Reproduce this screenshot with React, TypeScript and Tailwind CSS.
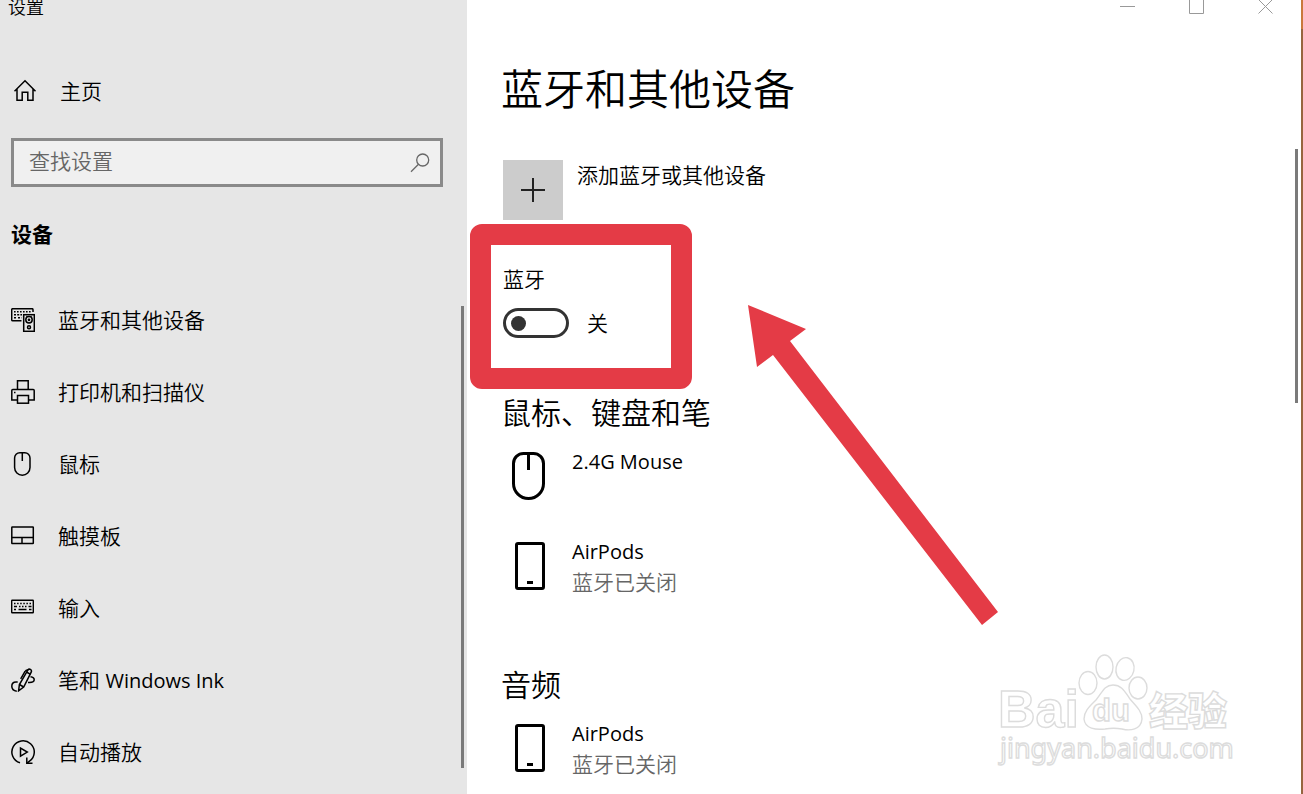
import React, { useState } from 'react'

interface IconProps {
    className?: string;
}

interface Device {
    name: string;
    status?: string;
    icon: React.FC<IconProps>;
}

const HomeIcon = () => (
    <svg width="24" height="24" viewBox="0 0 24 24" fill="none" stroke="#000" strokeWidth="1.5">
        <path d="M1.5 12.2 12 1.8l10.500 10.400M4 10v11.300h5.200v-8h5.600v8H20V10" />
    </svg>
)

const DevicesIcon = () => (
    <svg width="24" height="24" viewBox="0 0 24 24" fill="none" stroke="#000" strokeWidth="1.5">
        <path d="M22 4V1.700Q22 .7 21 .7H1.700Q.7 .7 .7 1.700v10q0 1 1 1H10.500" />
        <path d="M3 3.800h17" strokeDasharray="1.600 1.400" />
        <path d="M3 6.700h8M3 9.700h2M7 9.700h3.500" strokeDasharray="2 1.200" />
        <rect x="12.700" y="6.700" width="10.600" height="16.600" />
        <circle cx="18" cy="11.800" r="3.200" />
        <circle cx="18" cy="11.800" r=".6" />
        <circle cx="18" cy="19.300" r="1.500" />
        <path d="M15 8.300h.8M20.300 8.300h.8" strokeWidth="1" />
    </svg>
)

const PrinterIcon = () => (
    <svg width="24" height="24" viewBox="0 0 24 24" fill="none" stroke="#000" strokeWidth="1.5">
        <path d="M6.500 9.500V.8h10.700v8.700" />
        <path d="M6 20H.8V10.500q0-1 1-1h20.400q1 0 1 1V20H18" />
        <rect x="6.500" y="15.500" width="11" height="7.700" />
        <path d="M3 12.500h1.500" />
    </svg>
)

const MouseIcon = () => (
    <svg width="24" height="24" viewBox="0 0 24 24" fill="none" stroke="#000" strokeWidth="1.5">
        <path d="M8.800.8h5a5.200 5.200 0 0 1 5.200 5.200v9.500a7.700 7.700 0 0 1-15.400 0V6a5.200 5.200 0 0 1 5.200-5.200zM11.300.8V9" />
    </svg>
)

const TouchpadIcon = () => (
    <svg width="24" height="24" viewBox="0 0 24 24" fill="none" stroke="#000" strokeWidth="1.5">
        <rect x=".8" y="3" width="21.500" height="16.500" rx=".5" />
        <path d="M.8 13.500h21.500M11 13.500v6" />
    </svg>
)

const KeyboardIcon = () => (
    <svg width="24" height="24" viewBox="0 0 24 24" fill="none" stroke="#000" strokeWidth="1.400">
        <rect x=".7" y="4.200" width="21.600" height="12.600" rx=".5" />
        <path d="M3 7.500h17.500" strokeDasharray="1.500 1.600" />
        <path d="M3 10.500h3M8 10.500h1.500M11 10.500h1.500M14 10.500h1.500M17.500 10.500h3M3 13.500h2M7.500 13.500h8M18 13.500h2.500" />
    </svg>
)

const PenIcon = () => (
    <svg width="24" height="24" viewBox="0 0 24 24" fill="none" stroke="#000" strokeWidth="1.5">
        <path d="M7.600 22.800 8.400 16.500 16.800 2.200q1-1.600 2.600-.8t.8 2.800L12.700 19z" />
        <path d="M9.700 10.800 14 3.500q.8-1.500 3-1.800M15.500 4l4 2.300M8.400 16.500l4.300 2.500" />
        <path d="M6.700 14H5Q.8 14 .8 18.300T5.800 23.200M19.500 8.800q3.700.4 3.700 3T18.500 14.500h-1.500" />
    </svg>
)

const AutoPlayIcon = () => (
    <svg width="24" height="24" viewBox="0 0 24 24" fill="none" stroke="#000" strokeWidth="1.5">
        <path d="M9 22.800A11.200 11.200 0 1 1 18.500 21.200L16 23.200" />
        <path d="M15.800 17.500v5.700H21.500" />
        <path d="M9.500 8v8.200l6.800-4.100z" />
    </svg>
)

const SearchIcon = () => (
    <svg width="20" height="20" viewBox="0 0 20 20" fill="none" stroke="#666" strokeWidth="1.300">
        <circle cx="12.700" cy="7" r="6" />
        <path d="M8.500 11.300 1 18.800" />
    </svg>
)

const BigMouseIcon: React.FC<IconProps> = ({ className }) => (
    <svg className={className} width="60" height="48" viewBox="0 0 60 48" fill="none" stroke="#000" strokeWidth="3">
        <path d="M20.500 1.500h10a10 10 0 0 1 10 10v20a15 15 0 0 1-30 0v-20a10 10 0 0 1 10-10zM25.500 1.500V18" />
    </svg>
)

const PhoneIcon: React.FC<IconProps> = ({ className }) => (
    <svg className={className} width="60" height="48" viewBox="0 0 60 48" fill="none" stroke="#000" strokeWidth="3">
        <rect x="13.500" y="1.500" width="27" height="45" rx="1.500" />
        <path d="M24 40.500h6" />
    </svg>
)

const navItems = [
    { id: 'bluetooth', label: '蓝牙和其他设备', icon: DevicesIcon },
    { id: 'printers', label: '打印机和扫描仪', icon: PrinterIcon },
    { id: 'mouse', label: '鼠标', icon: MouseIcon },
    { id: 'touchpad', label: '触摸板', icon: TouchpadIcon },
    { id: 'typing', label: '输入', icon: KeyboardIcon },
    { id: 'pen', label: <span>笔和 <span className="text-[20px]">Windows Ink</span></span>, icon: PenIcon },
    { id: 'autoplay', label: '自动播放', icon: AutoPlayIcon },
]

const deviceGroups: { title: string; devices: Device[] }[] = [
    {
        title: '鼠标、键盘和笔',
        devices: [
            { name: '2.4G Mouse', icon: BigMouseIcon },
            { name: 'AirPods', status: '蓝牙已关闭', icon: PhoneIcon },
        ],
    },
    {
        title: '音频',
        devices: [{ name: 'AirPods', status: '蓝牙已关闭', icon: PhoneIcon }],
    },
]

const Sidebar = () => {
    const [query, setQuery] = useState('')

    return (
        <aside className="relative w-[467px] shrink-0 bg-[#e6e6e6]">
            <div className="flex h-[14px] items-center pl-2 text-[18px]">设置</div>
            <a href="#home" className="mt-[57px] flex h-10 items-center gap-[23px] pl-[13px]">
                <HomeIcon />
                主页
            </a>
            <div className="mt-[27px] ml-[11px] mr-6 flex h-[49px] items-center border-3 border-[#8a8a8a] bg-[#f0f0f0] pl-[15px] pr-2.5">
                <input
                    type="text"
                    aria-label="查找设置"
                    placeholder="查找设置"
                    value={query}
                    onChange={(e) => setQuery(e.target.value)}
                    className="min-w-0 flex-1 bg-transparent pb-1 outline-none placeholder:text-[#666]"
                />
                <button type="button" aria-label="搜索">
                    <SearchIcon />
                </button>
            </div>
            <h2 className="mt-[30px] pl-[11px] font-['Noto_Sans_CJK_SC',sans-serif] font-bold leading-8">设备</h2>
            <nav className="mt-[35px]">
                {navItems.map(({ id, label, icon: Icon }) => (
                    <a key={id} href={`#${id}`} className="flex h-[72px] items-center gap-[23px] pl-[11px]">
                        <Icon />
                        {label}
                    </a>
                ))}
            </nav>
            <div className="absolute top-[306px] bottom-[26px] right-[3px] w-[3px] bg-[#7a7a7a]"></div>
        </aside>
    )
}

const WindowButtons = () => (
    <div className="flex h-[14px] items-end justify-end gap-[54px] pr-7">
        <button type="button" aria-label="最小化">
            <svg width="15" height="15" viewBox="0 0 15 15" stroke="#999" fill="none">
                <path d="M0 7.500h15" />
            </svg>
        </button>
        <button type="button" aria-label="最大化">
            <svg width="15" height="15" viewBox="0 0 15 15" stroke="#999" fill="none">
                <path d="M.5 .5h14v14H.5z" />
            </svg>
        </button>
        <button type="button" aria-label="关闭">
            <svg width="15" height="15" viewBox="0 0 15 15" stroke="#999" fill="none">
                <path d="M.5 .5l14 14M14.500 .5l-14 14" />
            </svg>
        </button>
    </div>
)

const Watermark = () => (
    <svg
        className="pointer-events-none absolute bottom-[22px] right-[62px]"
        width="242"
        height="120"
        viewBox="0 0 242 120"
        fill="#fff"
        stroke="#dcdcdc"
        strokeWidth="1.400"
    >
        <text x="1" y="75" fontSize="52" fontWeight="700" fontFamily="Liberation Sans">Bai</text>
        <ellipse cx="91" cy="31" rx="9" ry="11.500" />
        <ellipse cx="107.500" cy="15" rx="8.500" ry="12" />
        <ellipse cx="128" cy="17" rx="9" ry="11.500" transform="rotate(12 128 17)" />
        <ellipse cx="141" cy="36" rx="9" ry="11" />
        <path d="M116 33c9 0 12 7 17 14 6 7 12 12 12 20-1 11-12 12-20 10-6-1-11-1-17 0-9 1-20 0-21-10 0-8 6-13 12-19 6-7 8-15 17-15z" />
        <text x="95" y="69" fontSize="31" fontWeight="700" fontFamily="Liberation Sans">du</text>
        <text x="152" y="73" fontSize="39" fontWeight="900" fontFamily="Noto Sans CJK SC">经验</text>
        <text x="3" y="106" fontSize="27" fontFamily="Noto Sans">jingyan.baidu.com</text>
    </svg>
)

const App: React.FC = () => {
    const [bluetooth, setBluetooth] = useState(false)

    return (
        <div className="flex min-h-screen bg-white font-['Open_Sans','Noto_Sans_CJK_SC_DemiLight','Noto_Sans_CJK_SC',sans-serif] text-[21px] leading-[30px] text-black">
            <Sidebar />
            <main className="relative min-w-0 flex-1">
                <WindowButtons />
                <div className="pl-9">
                    <h1 className="mt-[47px] -ml-0.5 text-[42px] leading-[56px]">蓝牙和其他设备</h1>
                    <button type="button" className="mt-[43px] flex items-start gap-3.5 text-left">
                        <span className="flex size-[60px] items-center justify-center bg-[#ccc]">
                            <svg width="24" height="24" viewBox="0 0 24 24" stroke="#222" strokeWidth="2">
                                <path d="M12 0v24M0 12h24" />
                            </svg>
                        </span>
                        添加蓝牙或其他设备
                    </button>

                    <section className="relative mt-11 w-fit">
                        <label htmlFor="bluetooth" className="block">蓝牙</label>
                        <div className="mt-3.5 flex h-[30px] items-center gap-[18px]">
                            <input
                                id="bluetooth"
                                type="checkbox"
                                role="switch"
                                checked={bluetooth}
                                onChange={(e) => setBluetooth(e.target.checked)}
                                className="flex h-[30px] w-[66px] appearance-none items-center rounded-full border-3 border-[#333] px-[5px] before:size-[15px] before:rounded-full before:bg-[#333] checked:justify-end"
                            />
                            <span>{bluetooth ? '开' : '关'}</span>
                        </div>
                        {/* highlight around the switch */}
                        <div className="pointer-events-none absolute -top-10 -left-[33px] h-[165px] w-[222px] rounded-xl border-[21px] border-[#e43b46]"></div>
                    </section>

                    {deviceGroups.map((group, index) => (
                        <section key={group.title} className={index === 0 ? 'mt-[55px]' : 'mt-[68px]'}>
                            <h2 className="-ml-0.5 text-[30px] leading-10">{group.title}</h2>
                            <ul className="mt-3.5 flex flex-col gap-[30px]">
                                {group.devices.map(({ name, status, icon: Icon }) => (
                                    <li key={name} className="flex min-h-[60px] items-start gap-[9px]">
                                        <Icon className="mt-[5px]" />
                                        <div>
                                            <p className="text-[20px]">{name}</p>
                                            {status && <p className="text-[#666]">{status}</p>}
                                        </div>
                                    </li>
                                ))}
                            </ul>
                        </section>
                    ))}
                </div>

                <svg
                    className="pointer-events-none absolute top-[305px] left-[281px]"
                    width="251"
                    height="320"
                    viewBox="0 0 251 320"
                    fill="#e43b46"
                >
                    <path d="M0 0l58 24-16 12 208 271-16 13L25 50 9 62z" />
                </svg>
                <Watermark />
                <div className="absolute top-[149px] right-[3px] h-[254px] w-[3px] bg-[#7a7a7a]"></div>
            </main>
            <div className="w-0.5 shrink-0 bg-[#96653f]">
                <div className="h-[29px] bg-[#c9783c]"></div>
            </div>
        </div>
    )
}

export default App;
